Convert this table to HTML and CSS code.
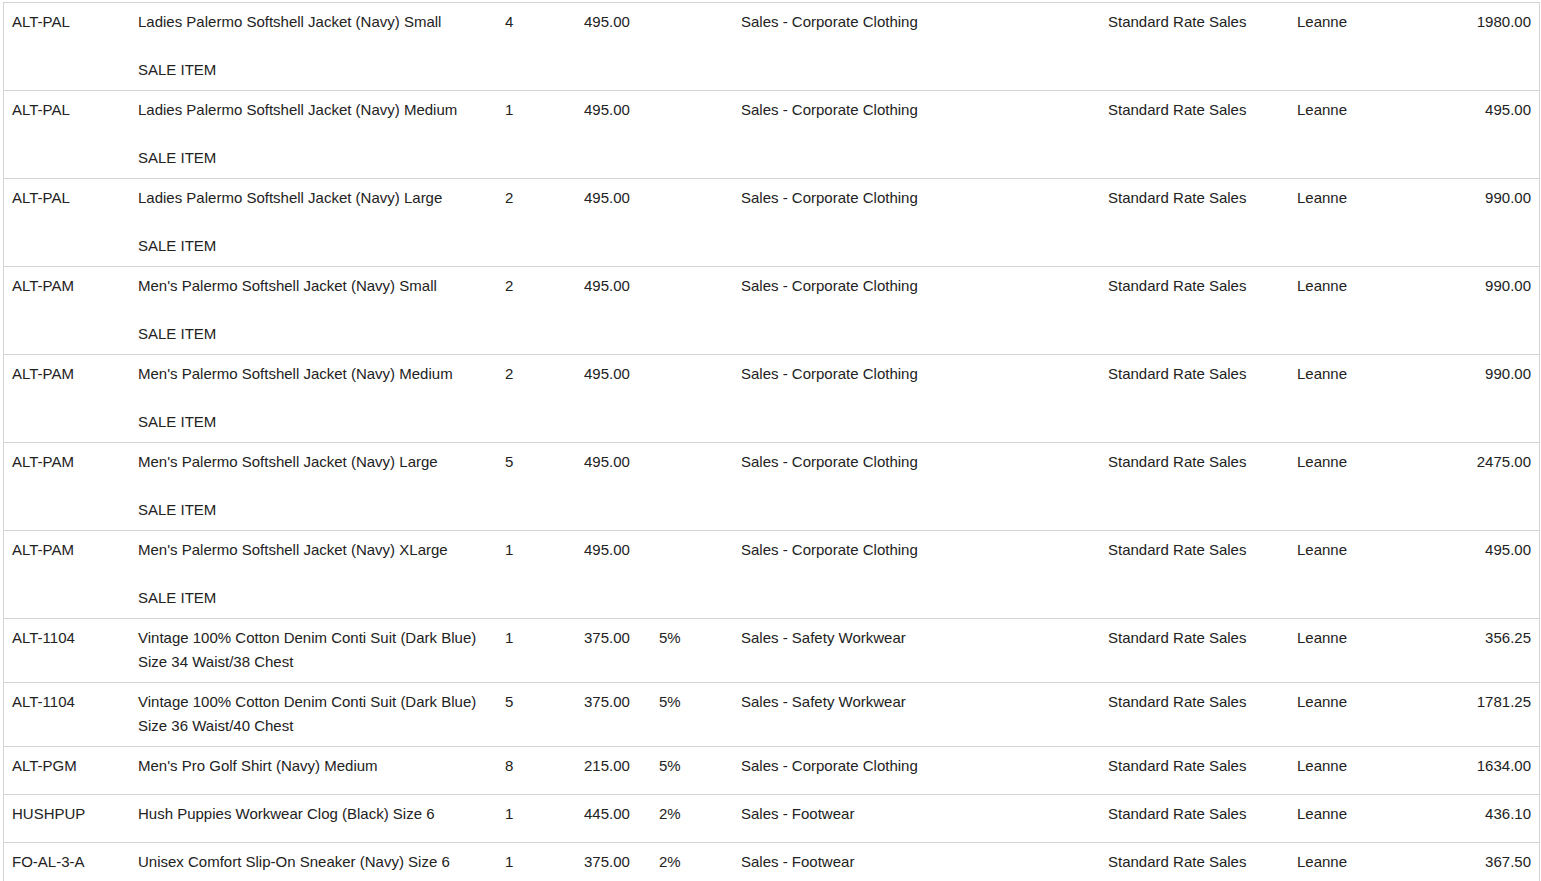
FILE: index.html
```html
<!DOCTYPE html>
<html>
<head>
<meta charset="utf-8">
<link rel="stylesheet" href="styles.css">
</head>
<body>
<div class="wrap">
<table class="lines">
<colgroup>
<col class="c-code"><col class="c-desc"><col class="c-qty"><col class="c-price"><col class="c-disc"><col class="c-acct"><col class="c-tax"><col class="c-name"><col class="c-amt">
</colgroup>
<tbody>
<tr><td>ALT-PAL</td><td>Ladies Palermo Softshell Jacket (Navy) Small<br><br>SALE ITEM</td><td>4</td><td>495.00</td><td></td><td>Sales - Corporate Clothing</td><td>Standard Rate Sales</td><td>Leanne</td><td class="amt">1980.00</td></tr>
<tr><td>ALT-PAL</td><td>Ladies Palermo Softshell Jacket (Navy) Medium<br><br>SALE ITEM</td><td>1</td><td>495.00</td><td></td><td>Sales - Corporate Clothing</td><td>Standard Rate Sales</td><td>Leanne</td><td class="amt">495.00</td></tr>
<tr><td>ALT-PAL</td><td>Ladies Palermo Softshell Jacket (Navy) Large<br><br>SALE ITEM</td><td>2</td><td>495.00</td><td></td><td>Sales - Corporate Clothing</td><td>Standard Rate Sales</td><td>Leanne</td><td class="amt">990.00</td></tr>
<tr><td>ALT-PAM</td><td>Men's Palermo Softshell Jacket (Navy) Small<br><br>SALE ITEM</td><td>2</td><td>495.00</td><td></td><td>Sales - Corporate Clothing</td><td>Standard Rate Sales</td><td>Leanne</td><td class="amt">990.00</td></tr>
<tr><td>ALT-PAM</td><td>Men's Palermo Softshell Jacket (Navy) Medium<br><br>SALE ITEM</td><td>2</td><td>495.00</td><td></td><td>Sales - Corporate Clothing</td><td>Standard Rate Sales</td><td>Leanne</td><td class="amt">990.00</td></tr>
<tr><td>ALT-PAM</td><td>Men's Palermo Softshell Jacket (Navy) Large<br><br>SALE ITEM</td><td>5</td><td>495.00</td><td></td><td>Sales - Corporate Clothing</td><td>Standard Rate Sales</td><td>Leanne</td><td class="amt">2475.00</td></tr>
<tr><td>ALT-PAM</td><td>Men's Palermo Softshell Jacket (Navy) XLarge<br><br>SALE ITEM</td><td>1</td><td>495.00</td><td></td><td>Sales - Corporate Clothing</td><td>Standard Rate Sales</td><td>Leanne</td><td class="amt">495.00</td></tr>
<tr><td>ALT-1104</td><td>Vintage 100% Cotton Denim Conti Suit (Dark Blue)<br>Size 34 Waist/38 Chest</td><td>1</td><td>375.00</td><td>5%</td><td>Sales - Safety Workwear</td><td>Standard Rate Sales</td><td>Leanne</td><td class="amt">356.25</td></tr>
<tr><td>ALT-1104</td><td>Vintage 100% Cotton Denim Conti Suit (Dark Blue)<br>Size 36 Waist/40 Chest</td><td>5</td><td>375.00</td><td>5%</td><td>Sales - Safety Workwear</td><td>Standard Rate Sales</td><td>Leanne</td><td class="amt">1781.25</td></tr>
<tr class="short"><td>ALT-PGM</td><td>Men's Pro Golf Shirt (Navy) Medium</td><td>8</td><td>215.00</td><td>5%</td><td>Sales - Corporate Clothing</td><td>Standard Rate Sales</td><td>Leanne</td><td class="amt">1634.00</td></tr>
<tr class="short"><td>HUSHPUP</td><td>Hush Puppies Workwear Clog (Black) Size 6</td><td>1</td><td>445.00</td><td>2%</td><td>Sales - Footwear</td><td>Standard Rate Sales</td><td>Leanne</td><td class="amt">436.10</td></tr>
<tr class="short"><td>FO-AL-3-A</td><td>Unisex Comfort Slip-On Sneaker (Navy) Size 6</td><td>1</td><td>375.00</td><td>2%</td><td>Sales - Footwear</td><td>Standard Rate Sales</td><td>Leanne</td><td class="amt">367.50</td></tr>
</tbody>
</table>
</div>
</body>
</html>
```
FILE: styles.css
```css
html, body {
  margin: 0;
  padding: 0;
  background: #ffffff;
}
.wrap {
  padding: 2px 0 0 3px;
}
.lines {
  width: 1537px;
  table-layout: fixed;
  border-collapse: separate;
  border-spacing: 0;
  border-top: 1px solid #d4d4d4;
  border-left: 1px solid #d4d4d4;
  border-right: 1px solid #d4d4d4;
  font-family: "Liberation Sans", Arial, sans-serif;
  font-size: 15px;
  line-height: 24px;
  color: #222222;
}
.c-code { width: 126px; }
.c-desc { width: 367px; }
.c-qty { width: 79px; }
.c-price { width: 75px; }
.c-disc { width: 82px; }
.c-acct { width: 367px; }
.c-tax { width: 189px; }
.c-name { width: 130px; }
.c-amt { width: 120px; }
.lines td {
  padding: 7px 8px 8px 8px;
  vertical-align: top;
  border-bottom: 1px solid #d4d4d4;
  white-space: nowrap;
  overflow: hidden;
}
.lines tr.short td {
  padding-bottom: 16px;
}
.lines td.amt {
  text-align: right;
}
```
